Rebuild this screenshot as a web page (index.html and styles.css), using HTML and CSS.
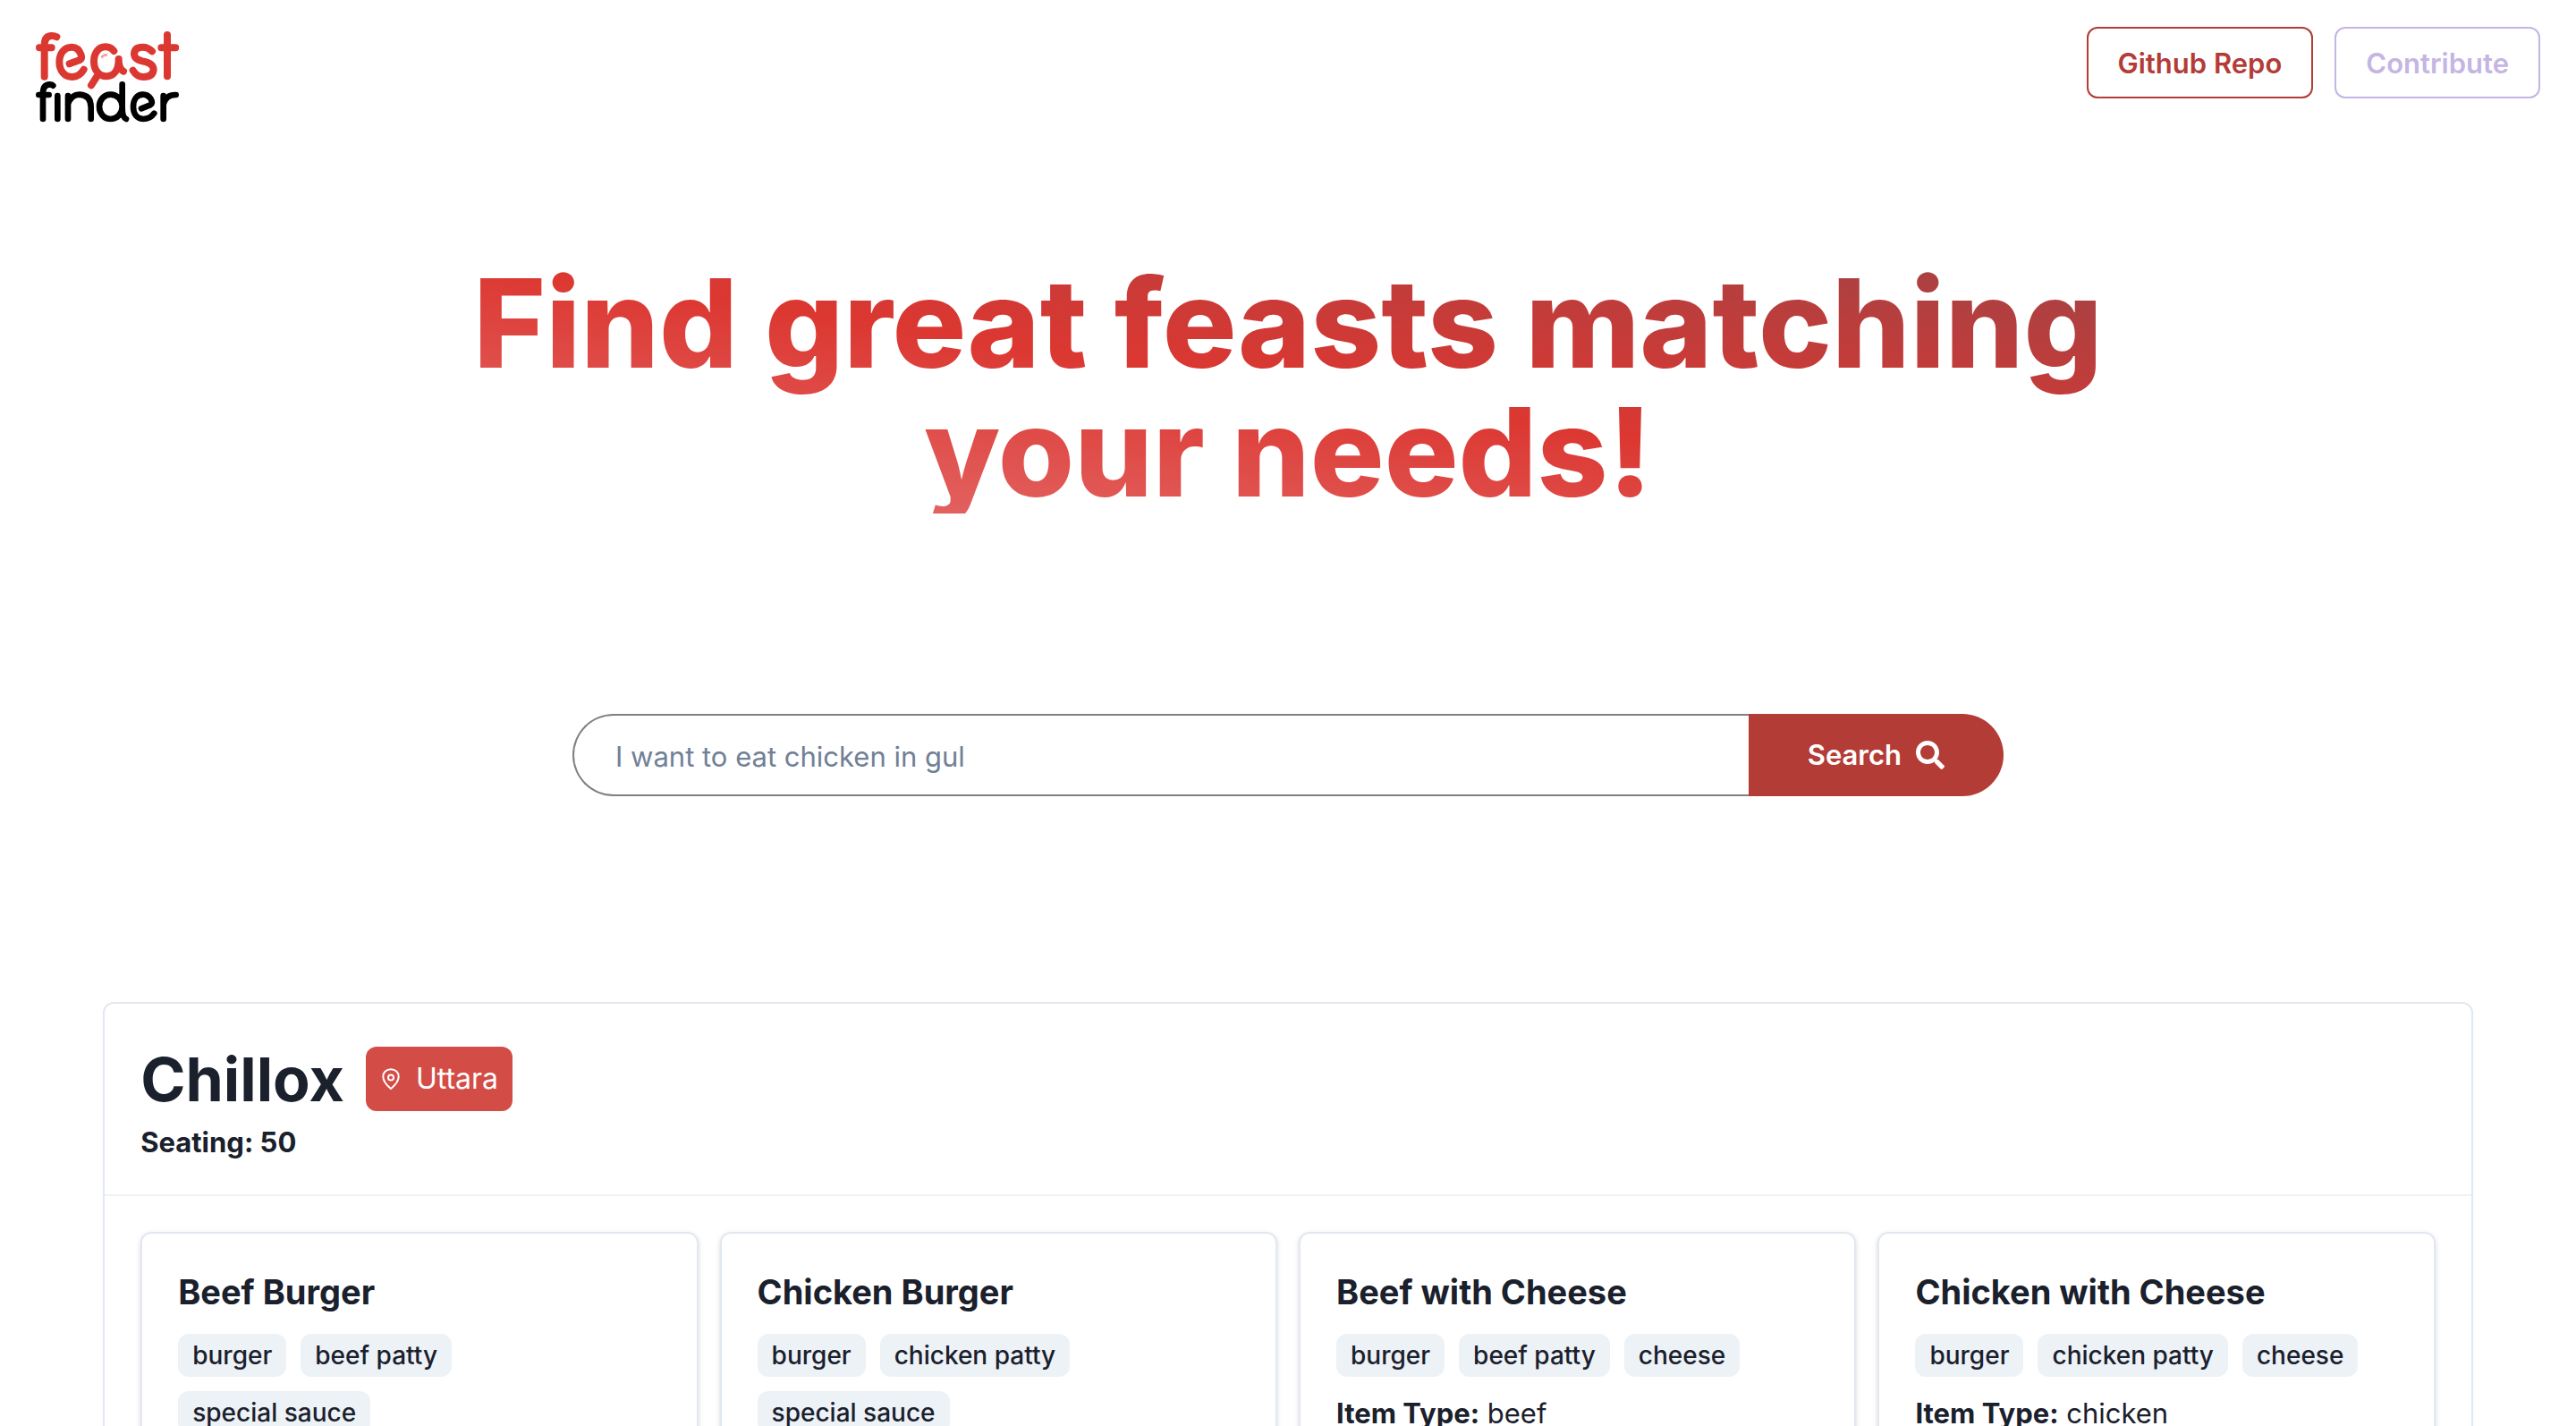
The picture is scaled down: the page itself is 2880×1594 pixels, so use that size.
FILE: index.html
```html
<!DOCTYPE html>
<html lang="en">
<head>
  <meta charset="utf-8">
  <title>Feast Finder</title>
  <link rel="stylesheet" href="styles.css">
</head>
<body>
  <header class="nav">
    <a class="logo" href="#" aria-label="Feast Finder">
      <svg viewBox="60 69 480 315" width="160" height="105" fill="none" stroke-linecap="round" stroke-linejoin="round">
        <g stroke="#dc3832" stroke-width="24">
          <path d="M89 227V122Q89 90 114 90Q123 90 130 94M72 130H113"/>
          <path d="M173 184L206 172Q216 167 212 154Q203 128 181 128C155 128 139 150 139 178C139 208 157 228 182 228Q207 227 221 203"/>
          <path d="M322 141Q311 127 294 127C270 127 255 148 255 176C255 205 272 226 297 226C320 226 338 208 338 168Q338 200 354 209"/>
          <path d="M264 228L246 256"/>
          <path d="M450 142Q436 128 419 128Q391 128 390 151Q390 169 418 175Q454 181 455 203Q453 228 422 228Q399 228 386 206"/>
          <path d="M501 87V226M481 130H529"/>
        </g>
        <path d="M282 161Q288 153 297 154" stroke="#f3a19f" stroke-width="8"/>
        <g stroke="#000" stroke-width="20">
          <path d="M84 369V282Q84 254 107 253Q114 253 118 257M70 288H104"/>
          <path d="M133 291V369"/>
          <path d="M168 291V369M168 318Q180 287 207 287Q245 289 245 330V369"/>
          <path d="M350 253V328C350 352 332 369 311 369C289 369 273 350 273 328C273 305 289 287 311 287C332 287 350 304 350 328Q350 364 363 369"/>
          <path d="M414 334L444 322Q454 315 446 302Q436 287 420 287C398 287 387 306 387 328C387 352 400 369 421 369Q444 369 457 350"/>
          <path d="M488 291V369M488 320Q497 287 530 288"/>
        </g>
      </svg>
    </a>
    <nav class="nav-actions">
      <a class="button button-repo" href="#">Github Repo</a>
      <button class="button button-contribute" type="button">Contribute</button>
    </nav>
  </header>

  <main>
    <h1 class="hero-title">Find great feasts matching your needs!</h1>

    <form class="search">
      <input class="search-input" type="text" aria-label="Search for food" placeholder="I want to eat chicken in gul">
      <button class="search-button" type="button">
        Search
        <svg class="search-icon" viewBox="0 0 512 512" fill="currentColor" aria-hidden="true"><path d="M505 442.700L405.300 343c-4.500-4.500-10.600-7-17-7H372c27.600-35.300 44-79.700 44-128C416 93.100 322.900 0 208 0S0 93.100 0 208s93.100 208 208 208c48.300 0 92.700-16.400 128-44v16.300c0 6.400 2.500 12.500 7 17l99.700 99.700c9.400 9.400 24.600 9.400 33.900 0l28.300-28.300c9.400-9.400 9.400-24.600.1-34zM208 336c-70.700 0-128-57.200-128-128 0-70.700 57.200-128 128-128 70.700 0 128 57.200 128 128 0 70.700-57.200 128-128 128z"/></svg>
      </button>
    </form>

    <section class="restaurant">
      <header class="restaurant-header">
        <div class="restaurant-heading">
          <h2 class="restaurant-name">Chillox</h2>
          <span class="location">
            <svg class="pin-icon" viewBox="0 0 24 28" fill="none" stroke="#fff" stroke-width="2" stroke-linejoin="round" aria-hidden="true"><path d="M12 25C9 22.500 3.300 17 3.300 11.500C3.300 6.500 7 3.200 12 3.200S20.700 6.500 20.700 11.500C20.700 17 15 22.500 12 25Z"/><circle cx="12" cy="12.500" r="3"/></svg>
            Uttara
          </span>
        </div>
        <p class="seating">Seating: 50</p>
      </header>
      <div class="menu">
        <article class="item">
          <h3 class="item-name">Beef Burger</h3>
          <ul class="tags"><li class="tag">burger</li><li class="tag">beef patty</li><li class="tag">special sauce</li></ul>
        </article>
        <article class="item">
          <h3 class="item-name">Chicken Burger</h3>
          <ul class="tags"><li class="tag">burger</li><li class="tag">chicken patty</li><li class="tag">special sauce</li></ul>
        </article>
        <article class="item">
          <h3 class="item-name">Beef with Cheese</h3>
          <ul class="tags"><li class="tag">burger</li><li class="tag">beef patty</li><li class="tag">cheese</li></ul>
          <p class="item-type"><b>Item Type:</b> beef</p>
        </article>
        <article class="item">
          <h3 class="item-name">Chicken with Cheese</h3>
          <ul class="tags"><li class="tag">burger</li><li class="tag">chicken patty</li><li class="tag">cheese</li></ul>
          <p class="item-type"><b>Item Type:</b> chicken</p>
        </article>
      </div>
    </section>
  </main>
</body>
</html>
```
FILE: styles.css
```css
*,
*::before,
*::after {
  box-sizing: border-box;
}

body,
h1,
h2,
h3,
p,
ul {
  margin: 0;
  padding: 0;
}

body {
  background: #fff;
  color: #1a202c;
  font-family: Inter, "Liberation Sans", sans-serif;
  font-size: 31px;
  line-height: 48px;
}

button,
input {
  font: inherit;
}

.nav {
  display: flex;
  justify-content: space-between;
  align-items: flex-start;
  padding: 30px 40px 0;
}

.logo {
  display: block;
  padding-top: 3px;
}

.logo svg {
  display: block;
}

.nav-actions {
  display: flex;
  gap: 24px;
}

.button {
  display: flex;
  align-items: center;
  height: 80px;
  padding: 2px 33px 0;
  border: 2px solid currentColor;
  border-radius: 12px;
  background: transparent;
  font-weight: 600;
  text-decoration: none;
}

.button-repo {
  color: #b33c37;
}

.button-contribute {
  color: #c4b5e3;
}

.hero-title {
  max-width: 1920px;
  margin: 148px auto 0;
  padding-top: 3px;
  background: linear-gradient(to top right, #e57373, #dc3731, #a04346) no-repeat;
  background-size: 100% calc(100% - 3px);
  -webkit-background-clip: text;
  background-clip: text;
  color: transparent;
  font-size: 138px;
  font-weight: 800;
  line-height: 144px;
  text-align: center;
}

.search {
  display: flex;
  width: 1600px;
  max-width: 100%;
  margin: 221px auto 0;
}

.search-input {
  flex: 1;
  min-width: 0;
  height: 92px;
  padding: 2px 46px 0;
  border: 2px solid #808080;
  border-right: 0;
  border-radius: 46px 0 0 46px;
  background: #fff;
  color: #1a202c;
}

.search-input::placeholder {
  color: #718096;
  opacity: 1;
}

.search-button {
  display: flex;
  align-items: center;
  gap: 16px;
  padding: 0 66px;
  border: 0;
  border-radius: 0 46px 46px 0;
  background: #b33c37;
  color: #fff;
  font-weight: 600;
}

.search-icon {
  width: 32px;
  height: 32px;
}

.restaurant {
  margin: 230px 4% 60px;
  border: 2px solid #e2e8f0;
  border-radius: 12px;
}

.restaurant-header {
  padding: 48px 40px 34px;
  border-bottom: 2px solid #edf2f7;
}

.restaurant-heading {
  display: flex;
  align-items: center;
  gap: 24px;
}

.restaurant-name {
  font-size: 68px;
  font-weight: 700;
  line-height: 72px;
}

.location {
  display: flex;
  align-items: center;
  gap: 16px;
  padding: 12px 16px;
  border-radius: 12px;
  background: #d44c46;
  color: #fff;
  font-size: 32px;
}

.pin-icon {
  width: 24px;
  height: 28px;
}

.seating {
  margin-top: 11px;
  font-weight: 700;
}

.menu {
  display: grid;
  grid-template-columns: repeat(4, 1fr);
  gap: 24px;
  padding: 40px;
}

.item {
  padding: 40px;
  border: 2px solid #e2e8f0;
  border-radius: 12px;
  box-shadow: 0 2px 6px rgba(0, 0, 0, 0.1), 0 2px 4px rgba(0, 0, 0, 0.06);
}

.item-name {
  font-size: 38px;
  font-weight: 700;
  line-height: 50px;
}

.tags {
  display: flex;
  flex-wrap: wrap;
  gap: 16px;
  max-width: 500px;
  margin-top: 22px;
  list-style: none;
}

.tag {
  padding: 0 16px;
  border-radius: 12px;
  background: #edf2f7;
  font-size: 28px;
  font-weight: 500;
  line-height: 48px;
}

.item-type {
  margin-top: 17px;
}
```
